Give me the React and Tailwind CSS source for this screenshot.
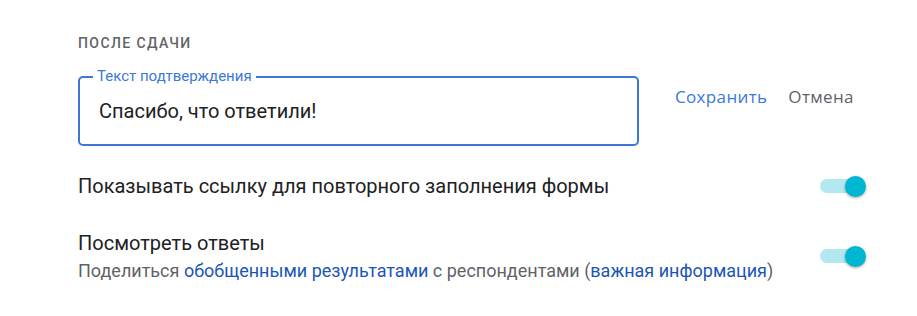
import React from 'react';

const Toggle = () => (
  <div className="relative w-[46px] h-[22px] flex items-center shrink-0">
    <div className="w-[34px] h-[14px] rounded-full bg-[#b3e8f0]" />
    <div className="absolute right-0 top-[1px] w-[21px] h-[21px] rounded-full bg-[#00b7d2] shadow-[0_1px_3px_rgba(0,0,0,0.35)]" />
  </div>
);

const App = () => {
  return (
    <div className="w-[917px] h-[316px] bg-white pl-[78px] pt-[33px] font-['Roboto',sans-serif]">
      <div className="w-[788px]">
        <h2 className="text-[14px] leading-5 font-medium tracking-[0.1em] text-[#5f6368]">ПОСЛЕ СДАЧИ</h2>

        <div className="flex mt-[23px]">
          <div className="relative w-[561px] h-[70px] border-2 border-[#3b78d8] rounded-[5px] flex items-center px-[19px]">
            <span className="absolute -top-[12px] left-[13px] px-[4px] bg-white text-[15px] leading-5 text-[#3b78d8]">
              Текст подтверждения
            </span>
            <span className="text-[20px] leading-7 text-[#202124]">Спасибо, что ответили!</span>
          </div>
          <div className="flex items-start gap-[21px] ml-[36px] mt-[9px] font-['Open_Sans',sans-serif] text-[17px] leading-6 tracking-[0.02em] font-medium">
            <span className="text-[#3b78d8]">Сохранить</span>
            <span className="text-[#5f6368]">Отмена</span>
          </div>
        </div>

        <div className="flex items-center justify-between mt-[26px]">
          <span className="text-[20px] leading-7 text-[#202124]">
            Показывать ссылку для повторного заполнения формы
          </span>
          <Toggle />
        </div>

        <div className="flex items-center justify-between mt-[29px]">
          <div>
            <div className="text-[20px] leading-7 text-[#202124]">Посмотреть ответы</div>
            <div className="text-[18px] leading-6 mt-[2px] text-[#5f6368]">
              Поделиться <span className="text-[#1a56b5]">обобщенными результатами</span> с респондентами (
              <span className="text-[#1a56b5]">важная информация</span>)
            </div>
          </div>
          <Toggle />
        </div>
      </div>
    </div>
  );
};

export default App;
